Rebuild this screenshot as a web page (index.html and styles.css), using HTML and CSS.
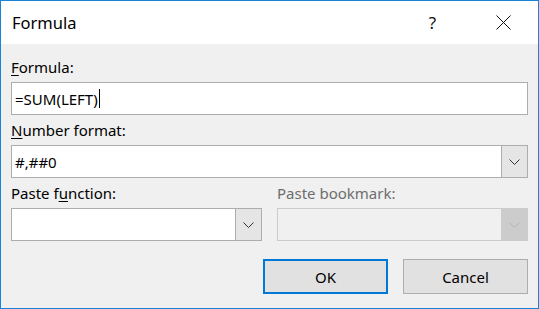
FILE: index.html
```html
<!DOCTYPE html>
<html>
<head>
<meta charset="utf-8">
<link rel="stylesheet" href="styles.css">
</head>
<body>
<div class="window">
  <div class="titlebar">
    <span class="title">Formula</span>
    <span class="tb-btn help">?</span>
    <span class="tb-btn close">
      <svg width="15" height="15" viewBox="0 0 15 15"><path d="M0.5 0.5 L14.5 14.5 M14.5 0.5 L0.5 14.5" stroke="#111" stroke-width="1" fill="none"/></svg>
    </span>
  </div>
  <div class="content">
    <div class="field">
      <div class="label"><u>F</u>ormula:</div>
      <div class="textbox"><span class="value">=SUM(LEFT)</span><span class="caret"></span></div>
    </div>
    <div class="field">
      <div class="label"><u>N</u>umber format:</div>
      <div class="combo"><span class="value">#,##0</span><span class="drop"><svg width="11" height="6" viewBox="0 0 11 6"><path d="M0.5 0.5 L5.5 5.5 L10.5 0.5" stroke="#333" stroke-width="1" fill="none"/></svg></span></div>
    </div>
    <div class="row">
      <div class="field">
        <div class="label">Paste f<u>u</u>nction:</div>
        <div class="combo"><span class="value"></span><span class="drop"><svg width="11" height="6" viewBox="0 0 11 6"><path d="M0.5 0.5 L5.5 5.5 L10.5 0.5" stroke="#333" stroke-width="1" fill="none"/></svg></span></div>
      </div>
      <div class="field disabled">
        <div class="label">Paste bookmark:</div>
        <div class="combo"><span class="value"></span><span class="drop"><svg width="11" height="6" viewBox="0 0 11 6"><path d="M0.5 0.5 L5.5 5.5 L10.5 0.5" stroke="#b4b4b4" stroke-width="1" fill="none"/></svg></span></div>
      </div>
    </div>
    <div class="buttons">
      <div class="btn default">OK</div>
      <div class="btn">Cancel</div>
    </div>
  </div>
</div>
</body>
</html>
```
FILE: styles.css
```css
html, body {
  margin: 0;
  padding: 0;
}
body {
  font-family: "Noto Sans", "Open Sans", sans-serif;
  color: #000;
}
.window {
  box-sizing: border-box;
  width: 539px;
  height: 309px;
  border: 1px solid #1883d7;
  background: #f0f0f0;
  display: flex;
  flex-direction: column;
}
.titlebar {
  height: 43px;
  background: #fff;
  display: flex;
  align-items: center;
}
.title {
  flex: 1;
  padding-left: 11px;
  font-size: 16.5px;
  padding-bottom: 1px;
}
.tb-btn {
  width: 69px;
  height: 43px;
  display: flex;
  align-items: center;
  justify-content: center;
}
.help {
  font-size: 17px;
  color: #111;
  font-weight: 400;
  padding-right: 4px;
  box-sizing: border-box;
}
.content {
  flex: 1;
  padding: 13px 10px 0 10px;
  font-size: 15px;
}
.label {
  height: 20px;
  line-height: 20px;
  margin-bottom: 5px;
  white-space: nowrap;
}
.label u {
  text-underline-offset: 2px;
}
.field {
  margin-bottom: 5px;
}
.textbox, .combo {
  box-sizing: border-box;
  height: 33px;
  border: 1px solid #adadad;
  background: #fff;
  display: flex;
  align-items: center;
}
.value {
  flex: 1;
  padding-left: 3px;
  font-size: 15px;
  line-height: 20px;
}
.textbox .value {
  flex: none;
}
.caret {
  width: 1px;
  height: 19px;
  background: #000;
  margin-left: 1px;
}
.drop {
  box-sizing: border-box;
  width: 27px;
  height: 33px;
  margin: -1px -1px -1px 0;
  border: 1px solid #adadad;
  background: #e5e5e5;
  display: flex;
  align-items: center;
  justify-content: center;
}
.row {
  display: grid;
  grid-template-columns: 1fr 1fr;
  column-gap: 15px;
}
.row .field {
  margin-bottom: 0;
}
.disabled .label {
  color: #6d6d6d;
}
.disabled .combo {
  background: #f0f0f0;
  border-color: #cccccc;
}
.disabled .drop {
  background: #cccccc;
  border-color: #cccccc;
}
.buttons {
  margin-top: 18px;
  display: flex;
  justify-content: flex-end;
  gap: 15px;
}
.btn {
  box-sizing: border-box;
  width: 125px;
  height: 35px;
  border: 1px solid #adadad;
  background: #e1e1e1;
  display: flex;
  align-items: center;
  justify-content: center;
  font-size: 15px;
}
.btn.default {
  border: 2px solid #0078d7;
}
```
